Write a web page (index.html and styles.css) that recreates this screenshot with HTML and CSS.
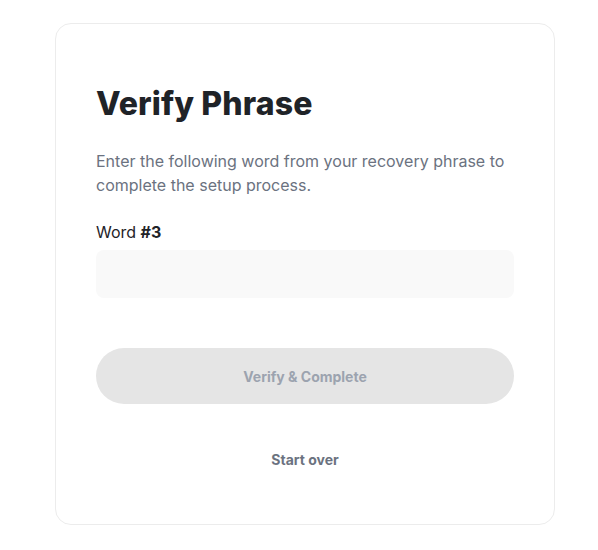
FILE: index.html
```html
<!DOCTYPE html>
<html>
<head>
<meta charset="utf-8">
<link rel="stylesheet" href="styles.css">
</head>
<body>
<div class="card">
  <h1 class="title">Verify Phrase</h1>
  <p class="desc">Enter the following word from your recovery phrase to complete the setup process.</p>
  <label class="label">Word <b>#3</b></label>
  <div class="input"></div>
  <button class="btn">Verify &amp; Complete</button>
  <div class="link">Start over</div>
</div>
</body>
</html>
```
FILE: styles.css
```css
html, body { margin: 0; padding: 0; background: #fff; }
body { font-family: Inter, "Noto Sans", sans-serif; }
.card {
  box-sizing: border-box;
  width: 500px;
  height: 502px;
  margin: 23px 0 0 55px;
  border: 1px solid #ececec;
  border-radius: 16px;
  padding: 60px 40px 40px;
  display: flex;
  flex-direction: column;
}
.title {
  margin: 0;
  font-size: 32px;
  font-weight: 800;
  line-height: 40px;
  color: #1f2328;
  letter-spacing: 0.15px;
}
.desc {
  margin: 25px 0 0;
  font-size: 16px;
  line-height: 24px;
  color: #6b7280;
}
.label {
  margin-top: 23px;
  font-size: 16px;
  line-height: 24px;
  color: #1f2328;
}
.label b { font-weight: 700; }
.input {
  margin-top: 6px;
  height: 48px;
  border-radius: 8px;
  background: #f9f9f9;
}
.btn {
  margin-top: 50px;
  height: 56px;
  border: none;
  border-radius: 28px;
  background: #e5e5e5;
  color: #9ca3af;
  font-family: inherit;
  font-size: 14px;
  font-weight: 700;
}
.link {
  margin-top: 46px;
  text-align: center;
  font-size: 14px;
  font-weight: 700;
  line-height: 20px;
  color: #6b7280;
}
```
